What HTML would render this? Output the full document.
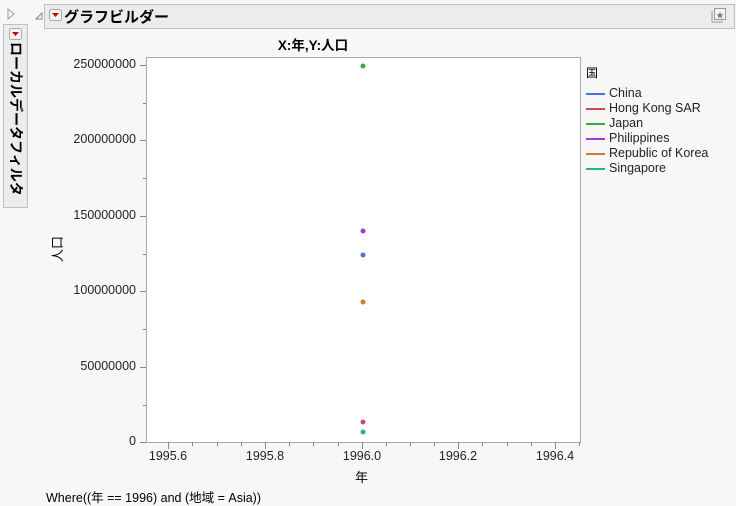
<!DOCTYPE html>
<html><head><meta charset="utf-8"><style>
body{margin:0;width:736px;height:506px;background:#f7f7f7;font-family:"Liberation Sans","Noto Sans CJK JP",sans-serif;position:relative;overflow:hidden}
.a{position:absolute}
.tk{font-size:12.5px;color:#222}
</style></head><body>
<svg class="a" style="left:0;top:0" width="736" height="506">
<path d="M8 9 L14 14 L8 19 Z" fill="none" stroke="#999"/>
<path d="M36 19 L42 13 L42 19 Z" fill="none" stroke="#888"/>
<rect x="44.5" y="4.5" width="690" height="24" fill="#ececec" stroke="#c0c0c0"/>
<rect x="49.5" y="9.5" width="12" height="11" rx="2" fill="#f4f4f4" stroke="#aaa"/>
<path d="M52 13 L59 13 L55.5 17 Z" fill="#c00"/>
<rect x="3.5" y="24.5" width="24" height="183" fill="#ececec" stroke="#c0c0c0"/>
<rect x="9.5" y="28.5" width="12" height="11" rx="2" fill="#f4f4f4" stroke="#aaa"/>
<path d="M12 32 L19 32 L15.5 36 Z" fill="#c00"/>
<rect x="714.5" y="8.5" width="11" height="11" fill="#f4f4f4" stroke="#999"/>
<path d="M712 11 V22 H723" fill="none" stroke="#999"/>
<text x="720" y="18" font-size="8" text-anchor="middle" fill="#777">★</text>
<rect x="146.5" y="57.5" width="434" height="385" fill="#fff" stroke="#aaa"/>
<g stroke="#888">
<path d="M140 65.5H146M140 140.5H146M140 216.5H146M140 291.5H146M140 367.5H146M140 442.5H146"/>
<path d="M143 103.5H146M143 178.5H146M143 254.5H146M143 329.5H146M143 405.5H146"/>
<path d="M168.5 442V449M265.5 442V449M362.5 442V449M458.5 442V449M555.5 442V449"/>
<path d="M192.5 442V446M217.5 442V446M241.5 442V446M289.5 442V446M313.5 442V446M338.5 442V446M386.5 442V446M410.5 442V446M434.5 442V446M482.5 442V446M507.5 442V446M531.5 442V446M579.5 442V446"/>
</g>
<g>
<circle cx="363" cy="66" r="2.5" fill="#3cad3c"/>
<circle cx="363" cy="231" r="2.5" fill="#a13ad8"/>
<circle cx="363" cy="255" r="2.5" fill="#4a6fe0"/>
<circle cx="363" cy="302" r="2.5" fill="#d07a2a"/>
<circle cx="363" cy="422" r="2.5" fill="#d24a5a"/>
<circle cx="363" cy="432" r="2.5" fill="#25b58a"/>
</g>
<g stroke-width="2">
<path d="M586 94H605" stroke="#4a6fe0"/>
<path d="M586 109H605" stroke="#d24a5a"/>
<path d="M586 124H605" stroke="#3cad3c"/>
<path d="M586 139H605" stroke="#a13ad8"/>
<path d="M586 154H605" stroke="#d07a2a"/>
<path d="M586 169H605" stroke="#25b58a"/>
</g>
</svg>
<div class="a" style="left:64px;top:6px;font-size:15px;font-weight:bold">グラフビルダー</div>
<div class="a" style="left:6px;top:42px;font-size:14px;font-weight:bold;writing-mode:vertical-rl;text-orientation:sideways">ローカルデータフィルタ</div>
<div class="a" style="left:213px;top:34px;width:200px;text-align:center;font-size:13.5px;font-weight:bold">X:年,Y:人口</div>
<div class="a tk" style="left:40px;width:96px;text-align:right;top:57px">250000000</div>
<div class="a tk" style="left:40px;width:96px;text-align:right;top:132px">200000000</div>
<div class="a tk" style="left:40px;width:96px;text-align:right;top:208px">150000000</div>
<div class="a tk" style="left:40px;width:96px;text-align:right;top:283px">100000000</div>
<div class="a tk" style="left:40px;width:96px;text-align:right;top:359px">50000000</div>
<div class="a tk" style="left:40px;width:96px;text-align:right;top:434px">0</div>
<div class="a" style="left:47px;top:236px;font-size:13px;writing-mode:vertical-rl;text-orientation:sideways;transform:rotate(180deg)">人口</div>
<div class="a tk" style="left:138px;width:60px;text-align:center;top:449px">1995.6</div>
<div class="a tk" style="left:235px;width:60px;text-align:center;top:449px">1995.8</div>
<div class="a tk" style="left:332px;width:60px;text-align:center;top:449px">1996.0</div>
<div class="a tk" style="left:428px;width:60px;text-align:center;top:449px">1996.2</div>
<div class="a tk" style="left:525px;width:60px;text-align:center;top:449px">1996.4</div>
<div class="a" style="left:355px;top:467px;font-size:13px">年</div>
<div class="a" style="left:46px;top:487px;font-size:12.5px">Where((年 == 1996) and (地域 = Asia))</div>
<div class="a" style="left:586px;top:64px;font-size:12px">国</div>
<div class="a tk" style="left:609px;top:86px">China</div>
<div class="a tk" style="left:609px;top:101px">Hong Kong SAR</div>
<div class="a tk" style="left:609px;top:116px">Japan</div>
<div class="a tk" style="left:609px;top:131px">Philippines</div>
<div class="a tk" style="left:609px;top:146px">Republic of Korea</div>
<div class="a tk" style="left:609px;top:161px">Singapore</div>
</body></html>
